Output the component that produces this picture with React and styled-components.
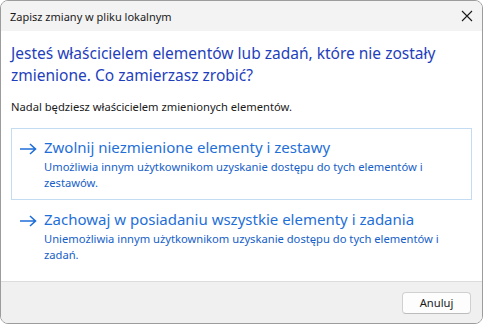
import React from 'react';
import styled, { createGlobalStyle } from 'styled-components';

const Global = createGlobalStyle`
  html, body {
    margin: 0;
    padding: 0;
    background: #ffffff;
  }
  body {
    font-family: "Noto Sans", "Open Sans", sans-serif;
  }
`;

const Window = styled.div`
  width: 483px;
  height: 324px;
  box-sizing: border-box;
  border: 1px solid #9c9c9c;
  border-radius: 8px;
  overflow: hidden;
  display: flex;
  flex-direction: column;
  background: #ffffff;
`;

const TitleBar = styled.div`
  height: 30px;
  flex-shrink: 0;
  background: #f3f3f3;
  display: flex;
  align-items: center;
  justify-content: space-between;
  padding: 0 9px 0 9px;
  font-size: 11px;
  color: #1a1a1a;
`;

const CloseButton = styled.div`
  width: 12px;
  height: 12px;
  display: flex;
`;

const Content = styled.div`
  flex: 1;
  padding: 11px 10px 0 10px;
  display: flex;
  flex-direction: column;
`;

const Heading = styled.div`
  font-size: 15.5px;
  line-height: 22px;
  color: #1f3fbd;
`;

const Note = styled.div`
  margin-top: 13px;
  font-size: 11.2px;
  line-height: 16px;
  color: #1a1a1a;
`;

const Links = styled.div`
  margin-top: 13px;
  display: flex;
  flex-direction: column;
`;

const CommandLink = styled.div`
  display: flex;
  align-items: flex-start;
  gap: 7px;
  padding: 8px 10px 8px 7px;
  border: 1px solid ${({ $focused }) => ($focused ? '#c4dcf2' : 'transparent')};
  height: 72px;
  box-sizing: border-box;
`;

const Arrow = styled.svg`
  width: 18px;
  height: 12px;
  margin-top: 6px;
  flex-shrink: 0;
`;

const LinkText = styled.div`
  display: flex;
  flex-direction: column;
`;

const LinkTitle = styled.div`
  font-size: 15px;
  line-height: 20px;
  color: #1f6fd8;
`;

const LinkDesc = styled.div`
  margin-top: 2px;
  font-size: 11.2px;
  line-height: 16px;
  color: #1560c8;
`;

const Footer = styled.div`
  height: 41px;
  flex-shrink: 0;
  background: #f0f0f0;
  border-top: 1px solid #dcdcdc;
  display: flex;
  align-items: center;
  justify-content: flex-end;
  padding-right: 11px;
`;

const Button = styled.button`
  width: 69px;
  height: 22px;
  border: 1px solid #d0d0d0;
  border-bottom-color: #bcbcbc;
  border-radius: 4px;
  background: #fdfdfd;
  font-family: "Noto Sans", "Open Sans", sans-serif;
  font-size: 11.2px;
  color: #1a1a1a;
  padding: 0;
`;

const ArrowIcon = () => (
  <Arrow viewBox="0 0 18 12">
    <path d="M1 6 H16.5 M11 1 L16.5 6 L11 11" fill="none" stroke="#1f6fd8" strokeWidth="1.6" />
  </Arrow>
);

const options = [
  {
    title: 'Zwolnij niezmienione elementy i zestawy',
    desc: 'Umożliwia innym użytkownikom uzyskanie dostępu do tych elementów i zestawów.',
    focused: true,
  },
  {
    title: 'Zachowaj w posiadaniu wszystkie elementy i zadania',
    desc: 'Uniemożliwia innym użytkownikom uzyskanie dostępu do tych elementów i zadań.',
    focused: false,
  },
];

const App = () => {
  return (
    <>
      <Global />
      <Window>
        <TitleBar>
          <span>Zapisz zmiany w pliku lokalnym</span>
          <CloseButton>
            <svg width="12" height="12" viewBox="0 0 12 12">
              <path d="M1 1 L11 11 M11 1 L1 11" stroke="#1a1a1a" strokeWidth="1.1" />
            </svg>
          </CloseButton>
        </TitleBar>
        <Content>
          <Heading>
            Jesteś właścicielem elementów lub zadań, które nie zostały zmienione. Co zamierzasz zrobić?
          </Heading>
          <Note>Nadal będziesz właścicielem zmienionych elementów.</Note>
          <Links>
            {options.map((o) => (
              <CommandLink key={o.title} $focused={o.focused}>
                <ArrowIcon />
                <LinkText>
                  <LinkTitle>{o.title}</LinkTitle>
                  <LinkDesc>{o.desc}</LinkDesc>
                </LinkText>
              </CommandLink>
            ))}
          </Links>
        </Content>
        <Footer>
          <Button>Anuluj</Button>
        </Footer>
      </Window>
    </>
  );
};

export default App;
